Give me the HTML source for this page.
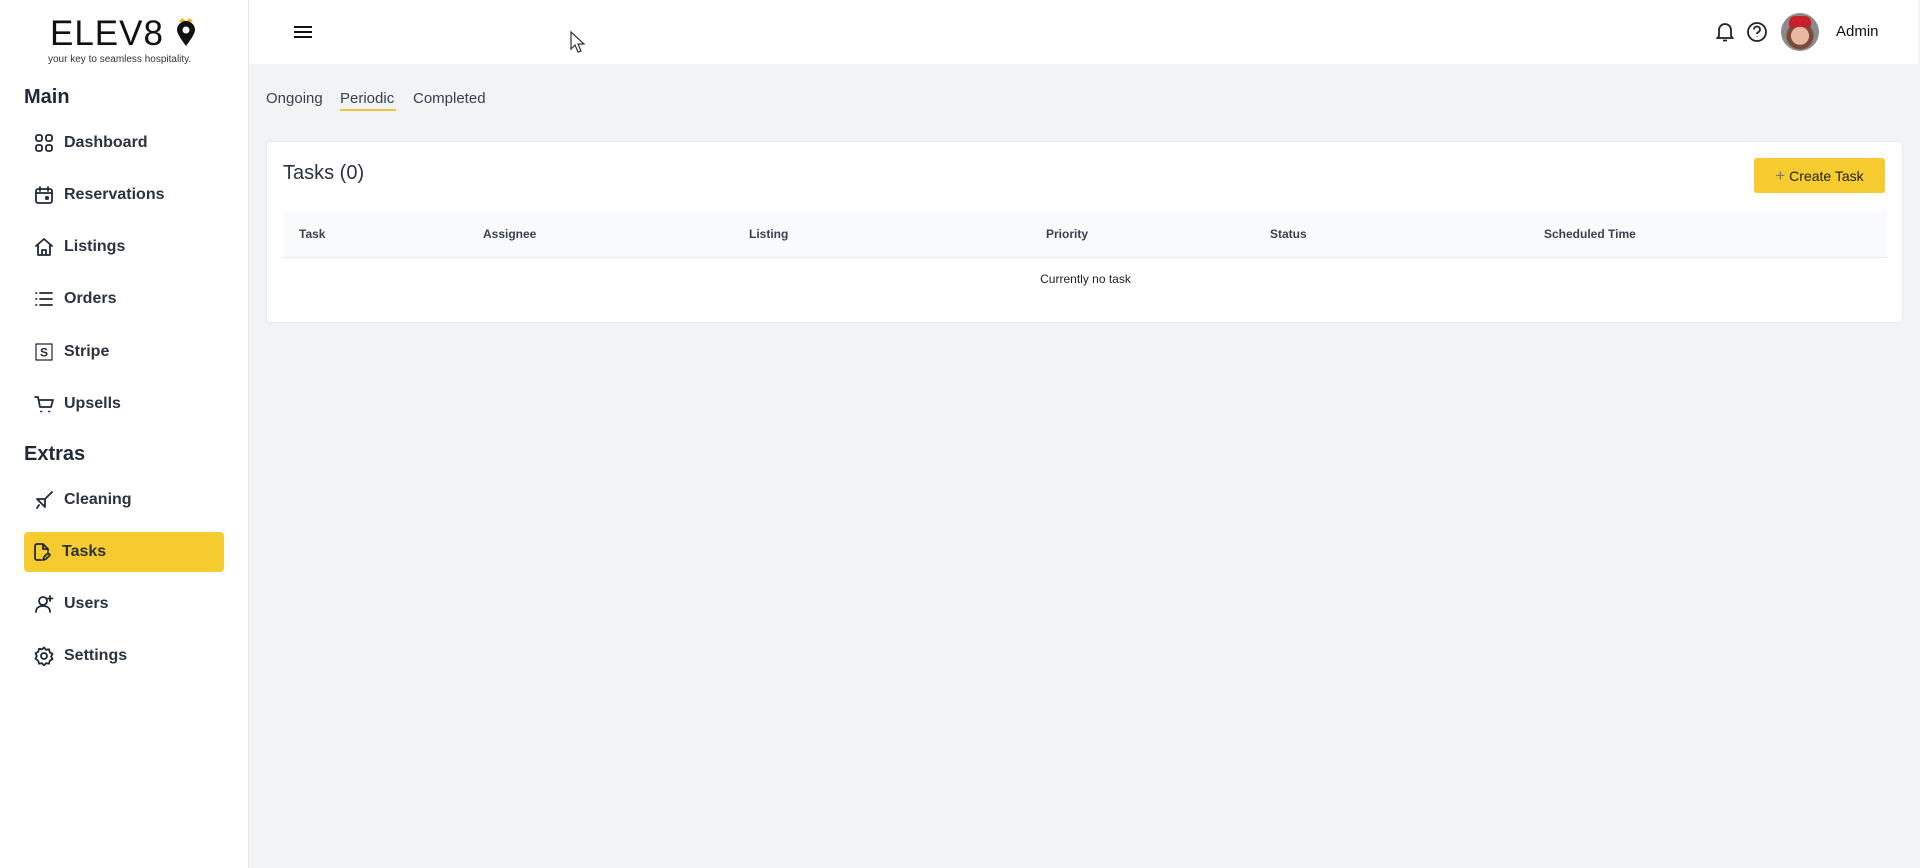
<!DOCTYPE html>
<html><head><meta charset="utf-8"><style>
*{box-sizing:border-box;margin:0;padding:0}
body{width:1920px;height:868px;overflow:hidden;background:#f2f3f5;font-family:"Liberation Sans",sans-serif;color:#1f2937;position:relative}
.side{position:absolute;left:0;top:0;width:249px;height:868px;background:#fff;border-right:1px solid #e5e7eb}
.top{position:absolute;left:249px;top:0;right:2px;height:64px;background:#fff}
.abs{position:absolute}
.h{font-weight:bold;font-size:20px;color:#1f2937}
.it{position:absolute;left:24px;width:200px;height:40px;display:flex;align-items:center;padding-left:10px;font-size:16px;font-weight:bold;color:#2b3340;border-radius:4px}
.it svg{width:20px;height:20px;margin-right:10px;fill:none;stroke:#1f2937;stroke-width:1.8;stroke-linecap:round;stroke-linejoin:round}
.card{position:absolute;left:266px;top:141px;width:1637px;height:182px;background:#fff;border:1px solid #e8e9ec;border-radius:4px}
.th{position:absolute;top:0;font-size:12px;font-weight:bold;color:#374151;line-height:47px}
</style></head><body>
<div class="side">
 <div class="abs" style="left:50px;top:14px;font-size:35px;letter-spacing:1px;color:#111;font-weight:300">ELEV8</div>
 <svg class="abs" style="left:174px;top:16px" width="24" height="32" viewBox="0 0 24 32"><path d="M5 6 L8 2 L12 5 L16 2 L19 6Z" fill="#e8b923"/><path d="M12 30 C6 22 3 17 3 14 A9 9 0 0 1 21 14 C21 17 18 22 12 30Z" fill="#111"/><circle cx="12" cy="14" r="3.5" fill="#fff"/></svg>
 <div class="abs" style="left:48px;top:54px;font-size:10px;color:#333">your key to seamless hospitality.</div>
 <div class="abs h" style="left:24px;top:86px">Main</div>
 <div class="it" style="top:123px"><svg viewBox="0 0 20 20"><rect x="2" y="2" width="6" height="6" rx="2"/><rect x="12" y="2" width="6" height="6" rx="2"/><rect x="2" y="12" width="6" height="6" rx="2"/><rect x="12" y="12" width="6" height="6" rx="2"/></svg>Dashboard</div>
 <div class="it" style="top:175px"><svg viewBox="0 0 20 20"><rect x="2" y="4" width="16" height="14" rx="2"/><path d="M2 8h16M6 2v4M14 2v4"/><rect x="12" y="12" width="2" height="2" fill="#1f2937"/></svg>Reservations</div>
 <div class="it" style="top:227px"><svg viewBox="0 0 20 20"><path d="M2 9 L10 2 L18 9 M4 8v10h12V8M8 18v-5h4v5"/></svg>Listings</div>
 <div class="it" style="top:279px"><svg viewBox="0 0 20 20"><path d="M6 4h12M6 10h12M6 16h12M2 4h.5M2 10h.5M2 16h.5"/></svg>Orders</div>
 <div class="it" style="top:332px"><svg viewBox="0 0 20 20" style="stroke-width:1.2"><rect x="2" y="2" width="16" height="16"/><text x="10" y="14.5" font-size="12" text-anchor="middle" fill="#1f2937" stroke="none" font-family="Liberation Sans">S</text></svg>Stripe</div>
 <div class="it" style="top:384px"><svg viewBox="0 0 20 20"><path d="M1 3h3l2 10h11l2-7H5M7 17.5h.5M15 17.5h.5"/></svg>Upsells</div>
 <div class="abs h" style="left:24px;top:443px">Extras</div>
 <div class="it" style="top:480px"><svg viewBox="0 0 20 20"><path d="M18 2 L12 8 M3 9 L11 9 L11 17 Z M5 15 L3 18"/></svg>Cleaning</div>
 <div class="it" style="top:532px;background:#f6cb2f;padding-left:8px"><svg viewBox="0 0 20 20"><path d="M9 18H5a2 2 0 0 1-2-2V4a2 2 0 0 1 2-2h6l5 5v2M11 2v5h5M11 18l1-3 4-4 2 2-4 4z"/></svg>Tasks</div>
 <div class="it" style="top:584px"><svg viewBox="0 0 20 20"><circle cx="9" cy="7" r="4"/><path d="M2 18c0-4 3-6 7-6s7 2 7 6M16 2v5M13.5 4.5h5"/></svg>Users</div>
 <div class="it" style="top:636px"><svg viewBox="0 0 20 20"><circle cx="10" cy="10" r="3"/><path d="M10 1.5l2 2.3 3-.5.8 3 2.7 1.5-1.3 2.7 1.3 2.7-2.7 1.5-.8 3-3-.5-2 2.3-2-2.3-3 .5-.8-3L1.5 12.7 2.8 10 1.5 7.3l2.7-1.5.8-3 3 .5z"/></svg>Settings</div>
</div>
<div class="top">
 <svg class="abs" style="left:44px;top:24px" width="20" height="16" viewBox="0 0 20 16"><path d="M1 3h18M1 8h18M1 13h18" stroke="#111" stroke-width="2"/></svg>
 <svg class="abs" style="left:320px;top:30px" width="18" height="24" viewBox="0 0 18 24"><path d="M2 2 L2 19 L6 15 L9 22 L12 21 L9 14 L15 14Z" fill="#fff" stroke="#333" stroke-width="1.2"/></svg>
 <svg class="abs" style="left:1466px;top:21px" width="20" height="22" viewBox="0 0 20 22" fill="none" stroke="#222" stroke-width="1.8"><path d="M4 15V9a6 6 0 0 1 12 0v6l1.5 2h-15zM8 19.5h4"/></svg>
 <svg class="abs" style="left:1497px;top:21px" width="22" height="22" viewBox="0 0 22 22" fill="none" stroke="#222" stroke-width="1.8"><circle cx="11" cy="11" r="9"/><path d="M8 8.5a3 3 0 1 1 4 2.8c-.8.4-1 1-1 1.7M11 15.5v.5"/></svg>
 <div class="abs" style="left:1532px;top:13px;width:38px;height:38px;border-radius:50%;background:radial-gradient(circle at 50% 60%,#e8b7a0 0 30%,#7a4a3a 31% 45%,#8a8a8a 46%);overflow:hidden"><div style="position:absolute;left:8px;top:3px;width:22px;height:11px;background:#c8202a;border-radius:6px 6px 2px 2px"></div></div>
 <div class="abs" style="left:1587px;top:23px;font-size:15px;color:#111">Admin</div>
</div>
<div class="abs" style="left:266px;top:90px;font-size:15px;color:#374151">Ongoing</div>
<div class="abs" style="left:340px;top:90px;font-size:15px;color:#374151">Periodic</div>
<div class="abs" style="left:340px;top:109px;width:56px;height:2px;background:#f0c43a"></div>
<div class="abs" style="left:413px;top:90px;font-size:15px;color:#374151">Completed</div>
<div class="card">
 <div class="abs" style="left:16px;top:20px;font-size:20px;color:#2b3340">Tasks (0)</div>
 <div class="abs" style="left:1487px;top:16px;width:131px;height:35px;background:#f6cb2f;border-radius:3px;font-size:14px;color:#222;line-height:35px;text-align:center"><span style="color:#777;font-size:17px">+</span> Create Task</div>
 <div class="abs" style="left:16px;top:69px;width:1604px;height:47px;background:#f9fafb;border-bottom:1px solid #e5e7eb">
  <div class="th" style="left:16px">Task</div><div class="th" style="left:200px">Assignee</div><div class="th" style="left:466px">Listing</div><div class="th" style="left:763px">Priority</div><div class="th" style="left:987px">Status</div><div class="th" style="left:1261px">Scheduled Time</div>
 </div>
 <div class="abs" style="left:0;width:1637px;top:130px;text-align:center;font-size:12px;color:#222">Currently no task</div>
</div>
</body></html>
